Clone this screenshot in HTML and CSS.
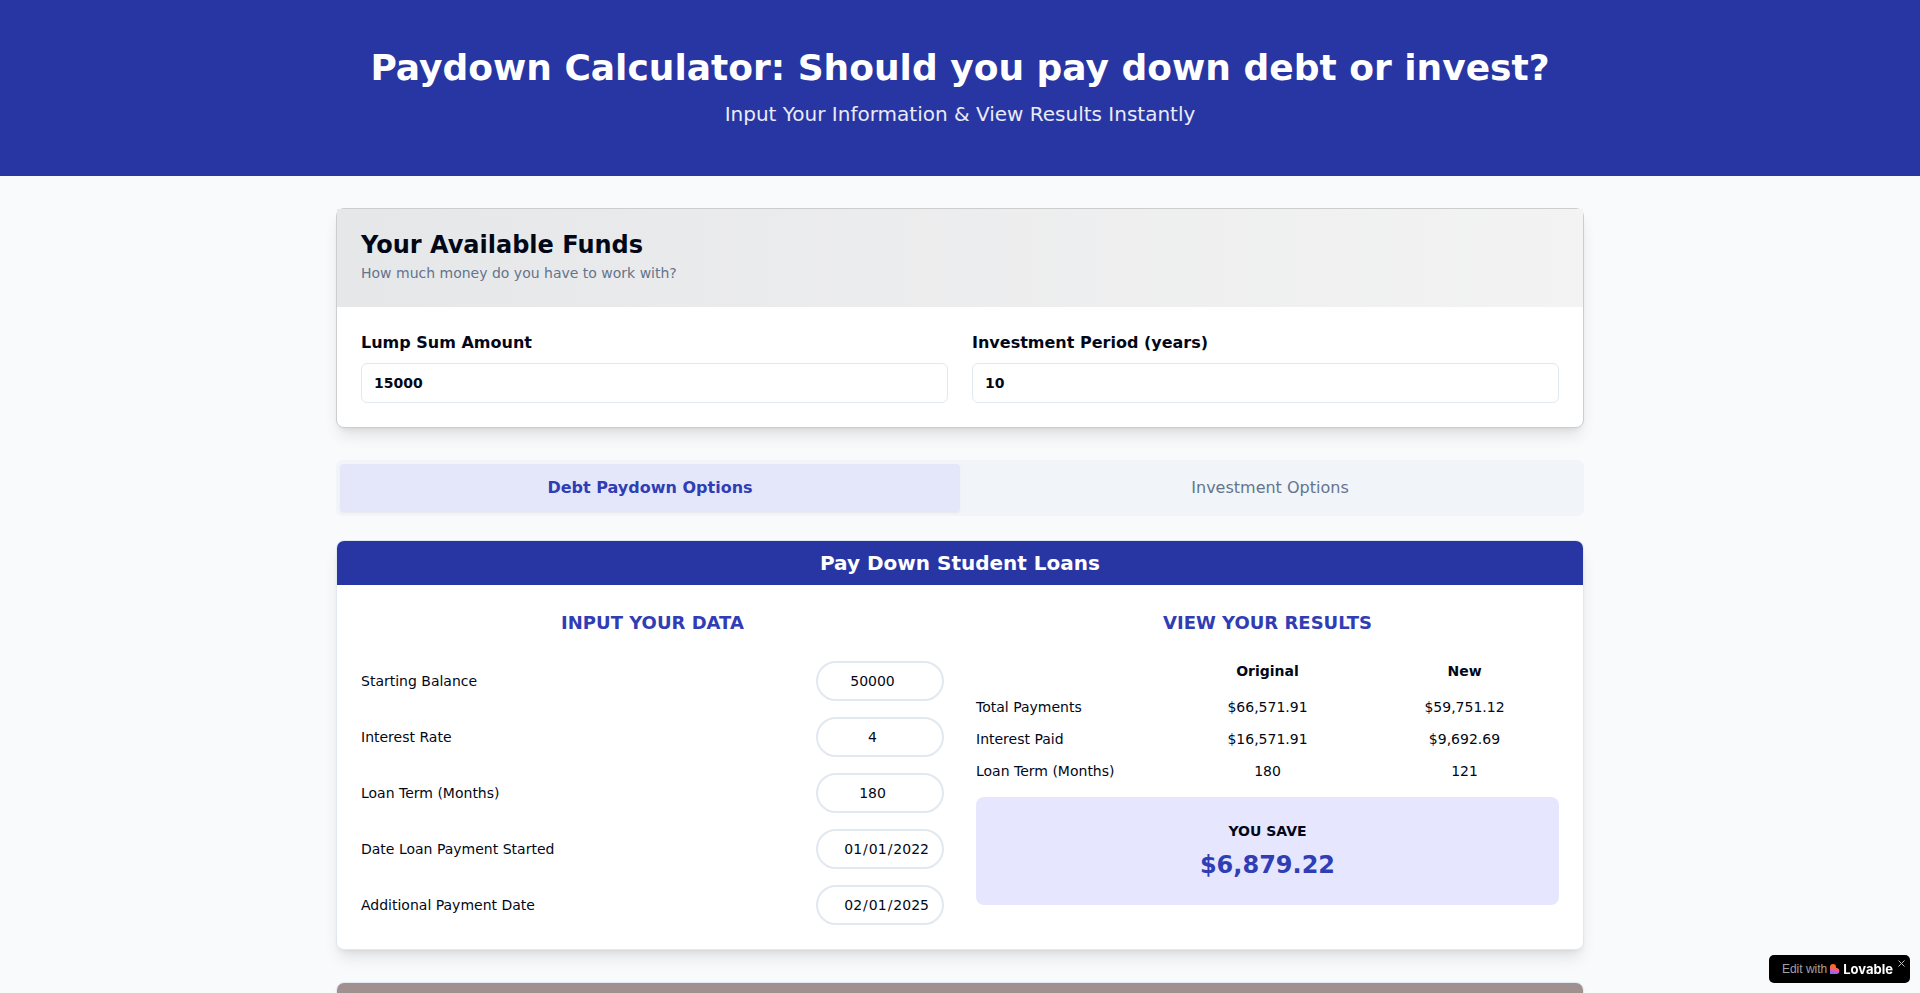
FILE: index.html
```html
<!DOCTYPE html>
<html lang="en">
<head>
    <meta charset="UTF-8">
    <meta name="viewport" content="width=device-width, initial-scale=1.0">
    <title>Paydown Calculator</title>
    <link rel="stylesheet" href="styles.css">
</head>
<body>
    <header class="hero">
        <h1>Paydown Calculator: Should you pay down debt or invest?</h1>
        <p>Input Your Information &amp; View Results Instantly</p>
    </header>

    <main class="container">
        <section class="card funds">
            <div class="funds-header">
                <h2>Your Available Funds</h2>
                <p>How much money do you have to work with?</p>
            </div>
            <div class="funds-fields">
                <div class="field">
                    <label for="lump-sum">Lump Sum Amount</label>
                    <input type="text" inputmode="numeric" id="lump-sum" value="15000">
                </div>
                <div class="field">
                    <label for="period">Investment Period (years)</label>
                    <input type="text" inputmode="numeric" id="period" value="10">
                </div>
            </div>
        </section>

        <div class="tabs" role="tablist">
            <button class="tab active" role="tab" aria-selected="true">Debt Paydown Options</button>
            <button class="tab" role="tab" aria-selected="false">Investment Options</button>
        </div>

        <section class="card loan">
            <h2 class="loan-title">Pay Down Student Loans</h2>
            <div class="loan-body">
                <div class="loan-inputs">
                    <h3>INPUT YOUR DATA</h3>
                    <div class="rows">
                        <div class="row">
                            <label for="balance">Starting Balance</label>
                            <input type="number" id="balance" value="50000">
                        </div>
                        <div class="row">
                            <label for="rate">Interest Rate</label>
                            <input type="number" id="rate" value="4">
                        </div>
                        <div class="row">
                            <label for="term">Loan Term (Months)</label>
                            <input type="number" id="term" value="180">
                        </div>
                        <div class="row">
                            <label for="start-date">Date Loan Payment Started</label>
                            <input type="date" id="start-date" value="2022-01-01">
                        </div>
                        <div class="row">
                            <label for="extra-date">Additional Payment Date</label>
                            <input type="date" id="extra-date" value="2025-02-01">
                        </div>
                    </div>
                </div>

                <div class="loan-results">
                    <h3>VIEW YOUR RESULTS</h3>
                    <table class="results">
                        <thead>
                            <tr>
                                <td></td>
                                <th scope="col">Original</th>
                                <th scope="col">New</th>
                            </tr>
                        </thead>
                        <tbody>
                            <tr>
                                <th scope="row">Total Payments</th>
                                <td>$66,571.91</td>
                                <td>$59,751.12</td>
                            </tr>
                            <tr>
                                <th scope="row">Interest Paid</th>
                                <td>$16,571.91</td>
                                <td>$9,692.69</td>
                            </tr>
                            <tr>
                                <th scope="row">Loan Term (Months)</th>
                                <td>180</td>
                                <td>121</td>
                            </tr>
                        </tbody>
                    </table>
                    <div class="savings">
                        <p>YOU SAVE</p>
                        <p class="savings-amount">$6,879.22</p>
                    </div>
                </div>
            </div>
        </section>

        <section class="card loan">
            <div class="loan-title alt"></div>
        </section>
    </main>

    <!-- Lovable badge -->
    <div class="badge">
        <a href="#">
            <span>Edit with</span>
            <svg width="10" height="10" viewBox="0 0 10 10" aria-hidden="true">
                <defs>
                    <linearGradient id="heart" x1="0.6" y1="0" x2="0.4" y2="1">
                        <stop offset="0.3" stop-color="#ff6a1f"/>
                        <stop offset="0.6" stop-color="#f8559a"/>
                        <stop offset="0.95" stop-color="#6a75ff"/>
                    </linearGradient>
                </defs>
                <path d="M3 0a3 3 0 0 1 3 3v1.1h1A3 3 0 0 1 7 10H0V3a3 3 0 0 1 3-3z" fill="url(#heart)"/>
            </svg>
            <strong>Lovable</strong>
        </a>
        <button class="badge-close" aria-label="Close">
            <svg width="7" height="7" viewBox="0 0 7 7" aria-hidden="true">
                <path d="M0.5 0.5l6 6M6.5 0.5l-6 6" stroke="#c4c4c4" fill="none"/>
            </svg>
        </button>
    </div>
</body>
</html>
```
FILE: styles.css
```css
* {
    box-sizing: border-box;
}
body {
    margin: 0;
    font-family: "DejaVu Sans", sans-serif;
    font-size: 16px;
    line-height: 24px;
    color: #020817;
    background-color: #f9fafc;
}
h1, h2, h3, p {
    margin: 0;
}
input, button {
    font-family: inherit;
    color: inherit;
}
.hero {
    padding: 48px 16px;
    background-color: #2836a4;
    color: #fff;
    text-align: center;
}
.hero h1 {
    margin-bottom: 12px;
    font-size: 36px;
    line-height: 40px;
}
.hero p {
    font-size: 20px;
    line-height: 28px;
    opacity: 0.9;
}
.container {
    max-width: 1280px;
    margin: 0 auto;
    padding: 32px 16px;
}
.card {
    background-color: #fff;
    border: 1px solid #e2e8f0;
    border-radius: 8px;
    box-shadow: 0 10px 15px -3px rgba(0, 0, 0, 0.1), 0 4px 6px -4px rgba(0, 0, 0, 0.1);
}

/* Available funds */
.funds {
    margin-bottom: 32px;
    border-color: #cccdd0;
}
.funds-header {
    padding: 24px;
    background: linear-gradient(to right, #e6e7e9, #f3f3f3);
}
.funds-header h2 {
    margin-bottom: 6px;
    font-size: 24px;
    line-height: 24px;
}
.funds-header p {
    font-size: 14px;
    line-height: 20px;
    color: #64748b;
}
.funds-fields {
    display: grid;
    grid-template-columns: 1fr 1fr;
    gap: 24px;
    padding: 24px;
}
.field {
    display: flex;
    flex-direction: column;
    gap: 8px;
}
.field label {
    font-weight: bold;
}
.field input {
    width: 100%;
    height: 40px;
    padding: 8px 12px;
    border: 1px solid #e2e8f0;
    border-radius: 6px;
    background-color: #fff;
    font-size: 14px;
    font-weight: bold;
}

/* Tabs */
.tabs {
    display: grid;
    grid-template-columns: 1fr 1fr;
    margin-bottom: 24px;
    padding: 4px;
    border-radius: 6px;
    background-color: #f1f5f9;
}
.tab {
    padding: 12px;
    border: none;
    border-radius: 4px;
    background: none;
    font-size: 16px;
    line-height: 24px;
    color: #64748b;
    cursor: pointer;
}
.tab.active {
    background-color: #e4e7fa;
    color: #303db5;
    font-weight: bold;
    box-shadow: 0 1px 2px rgba(0, 0, 0, 0.05);
}

/* Loan cards */
.loan {
    margin-bottom: 32px;
    overflow: hidden;
}
.loan-title {
    padding: 12px;
    background-color: #2836a4;
    color: #fff;
    font-size: 20px;
    line-height: 20px;
    text-align: center;
}
.loan-title.alt {
    min-height: 44px;
    background-color: #a09090;
}
.loan-body {
    display: grid;
    grid-template-columns: 1fr 1fr;
    gap: 32px;
    padding: 24px;
    font-size: 14px;
    line-height: 20px;
}
.loan-body h3 {
    margin-bottom: 24px;
    color: #303db5;
    font-size: 18px;
    line-height: 28px;
    text-align: center;
}
.rows {
    display: flex;
    flex-direction: column;
    gap: 16px;
}
.row {
    display: flex;
    align-items: center;
    justify-content: space-between;
}
.row input {
    width: 128px;
    height: 40px;
    padding: 8px 12px;
    border: 2px solid #e2e8f0;
    border-radius: 20px;
    background-color: #fff;
    font-size: 14px;
    text-align: center;
}
.row input[type="number"]::-webkit-inner-spin-button {
    opacity: 0;
}
.row input[type="date"]::-webkit-calendar-picker-indicator {
    display: none;
}
.row input[type="date"]::-webkit-datetime-edit {
    text-align: right;
}
.results {
    width: calc(100% + 16px);
    margin: 0 -8px 10px;
    table-layout: fixed;
    border-spacing: 8px 0;
}
.results th,
.results td {
    padding: 6px 0;
    text-align: center;
}
.results thead th,
.results thead td {
    padding: 0 0 10px;
}
.results tbody th {
    font-weight: normal;
    text-align: left;
}
.savings {
    padding: 24px;
    border-radius: 8px;
    background-color: #e6e6ff;
    font-weight: bold;
    text-align: center;
}
.savings-amount {
    margin-top: 8px;
    color: #303db5;
    font-size: 24px;
    line-height: 32px;
}

/* Badge */
.badge {
    position: fixed;
    right: 10px;
    bottom: 10px;
    display: flex;
    align-items: flex-start;
    height: 28px;
    border-radius: 5px;
    background-color: #000;
    font-family: "Liberation Sans", Arial, sans-serif;
}
.badge a {
    display: flex;
    align-items: center;
    gap: 3px;
    height: 28px;
    padding-left: 13px;
    color: #a3a3a3;
    font-size: 12px;
    text-decoration: none;
}
.badge strong {
    color: #fff;
    font-family: Inter, "Liberation Sans", sans-serif;
    font-size: 13px;
}
.badge-close {
    display: flex;
    padding: 5px;
    border: none;
    background: none;
    cursor: pointer;
}
```
